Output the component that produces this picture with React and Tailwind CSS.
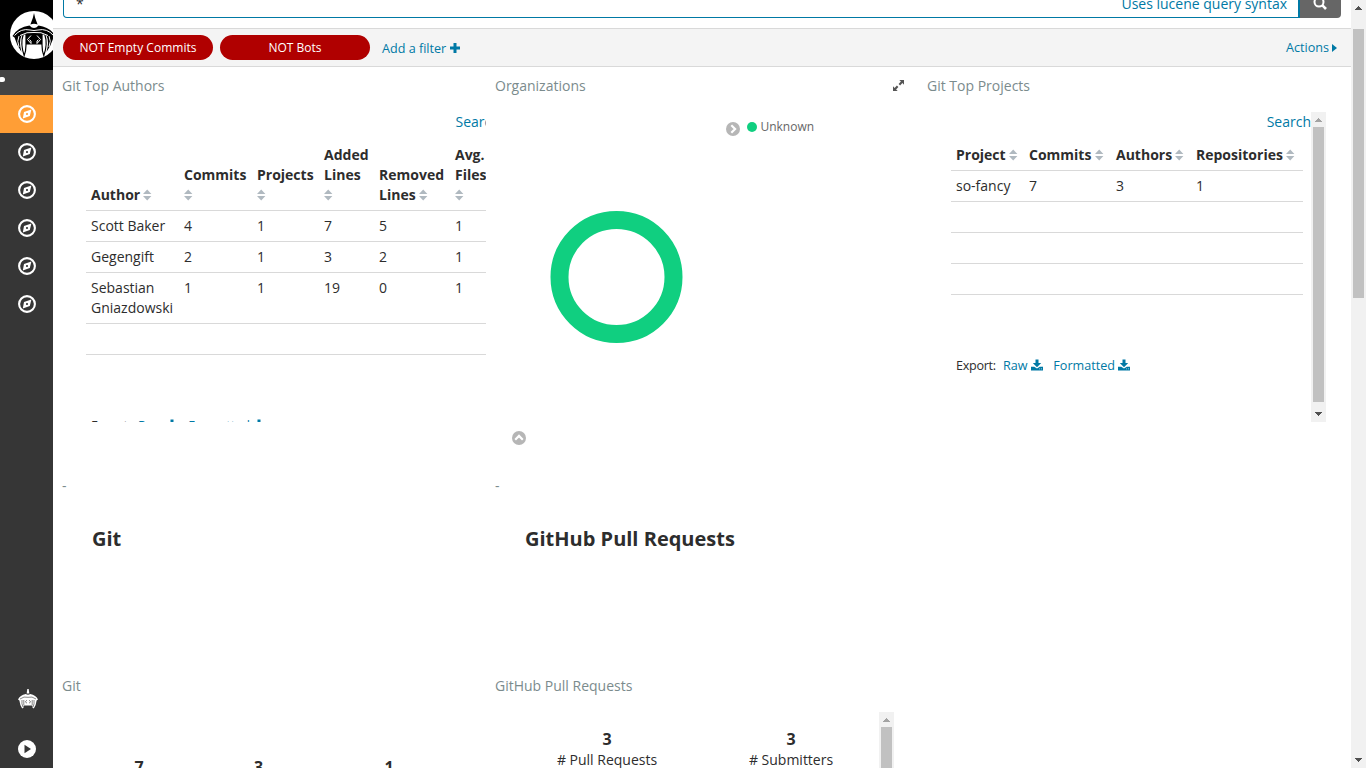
import React from "react";

const Compass = () => (
  <svg width="18" height="18" viewBox="0 0 18 18" fill="none">
    <circle cx="9" cy="9" r="7.9" stroke="#fff" strokeWidth="2.1" />
    <path fill="#fff" fillRule="evenodd" d="M13.4 4.4L6 7L4.8 13.6L11.8 11zM9 7.9A1.1 1.1 0 1 1 9 10.1A1.1 1.1 0 1 1 9 7.9z" />
  </svg>
);

const Logo = () => (
  <svg className="h-12 w-12 max-w-none shrink-0" width="48" height="48" viewBox="0 0 48 48">
    <circle cx="24" cy="24" r="24" fill="#fff" />
    <path d="M24 2L25.2 7L27.6 13.5Q24 12 20.4 13.5L22.8 7z" />
    <path d="M19.5 14.5Q24 19.5 28.5 14.5Q40 16 45.5 25L43.5 26.5Q41 35 36.5 41Q39.5 31 36.5 24.5L32 22.5V33.5H16V22.5L11.5 24.5Q8.5 31 11.5 41Q7 35 4.5 26.5L2.5 25Q8 16 19.5 14.5z" />
    <path d="M13.2 23.5L16 22.5V34Q16 40 14.2 44.5Q10 33 13.2 23.5z" fill="#fff" stroke="#000" strokeWidth="1.2" />
    <path d="M34.8 23.5L32 22.5V34Q32 40 33.8 44.5Q38 33 34.8 23.5z" fill="#fff" stroke="#000" strokeWidth="1.2" />
    <g fill="none" stroke="#fff" strokeWidth="1">
      <path d="M4.5 24.5Q11 17 20 19Q24 20 28 19Q37 17 43.5 24.5" />
      <path d="M10 24.5Q17 20.5 24 21.5Q31 20.5 38 24.5" />
      <path d="M9 25Q6.5 30 9 36M39 25Q41.5 30 39 36" />
      <path d="M21 24.5L17.5 28.5L21 32.5V30L19.5 28.7M27 24.5L30.5 28.5L27 32.5V30L28.5 28.7" />
    </g>
  </svg>
);

const Helmet = () => (
  <svg className="mb-[30px]" width="20" height="21" viewBox="0 0 20 21">
    <g fill="#fff">
      <path d="M9.3 0H10.7L11.3 4.5H8.7z" />
      <path d="M7.8 5Q10 6.3 12.2 5Q18 6 20 10.5L18.6 11.5Q18.2 16 15.8 19.5L14.4 18.5V16.5H5.6V18.5L4.2 19.5Q1.8 16 1.4 11.5L0 10.5Q2 6 7.8 5z" />
    </g>
    <g fill="none" stroke="#363636" strokeWidth="0.6">
      <path d="M2 10Q6 7 10 8.3Q14 7 18 10M4 11Q3.4 15 5 18M16 11Q16.6 15 15 18M5.8 11V16M14.2 11V16M9 11.2L7.3 12.8L9 14.2M11 11.2L12.7 12.8L11 14.2" />
    </g>
  </svg>
);

const Sort = () => (
  <svg className="-ml-[0.5px] inline-block align-[-1px]" width="9" height="12" viewBox="0 0 9 12" fill="#b0b9c0">
    <path d="M4.2 0.5L8.4 5H0zM0 7H8.4L4.2 11.5z" />
  </svg>
);

const Download = () => (
  <svg className="inline-block align-[-1px]" width="12" height="12" viewBox="0 0 12 12" fill="#0079a5">
    <path d="M4.5 0.5H7.5V4H10.2L6 8.2L1.8 4H4.5z" />
    <path fillRule="evenodd" d="M0 7.8H3.2L6 9.4L8.8 7.8H12V11.4H0zM8.3 9.5V10.3H9.1V9.5zM10.1 9.5V10.3H10.9V9.5z" />
  </svg>
);

const Chevron = ({ className }) => (
  <svg className={className} width="14" height="14" viewBox="0 0 14 14">
    <circle cx="7" cy="7" r="7" fill="#b6b6b6" />
    <path d="M5.3 3.2L9.1 7L5.3 10.8" stroke="#fff" strokeWidth="2.2" fill="none" />
  </svg>
);

const Arrow = ({ down, color }) => (
  <svg width="7" height="4" viewBox="0 0 7 4" shapeRendering="crispEdges" fill={color} className={down ? "rotate-180" : ""}>
    <path d="M3 0H4V1H5V2H6V3H7V4H0V3H1V2H2V1H3z" />
  </svg>
);

const Title = ({ children }) => <h3 className="h-[30px] text-[14px] leading-[30px] text-[#7b8b8d]">{children}</h3>;

const Export = () => (
  <div className="mt-[31px] flex pl-[5px] text-[12.6px] leading-[18px] whitespace-nowrap">
    <span className="w-[40px] tracking-[-0.3px]">Export:</span>
    <span className="ml-[7px] text-[#0079a5]">Raw <Download /></span>
    <span className="ml-[10.5px] text-[#0079a5]">Formatted <Download /></span>
  </div>
);

const Table = ({ cols, width, heads, rows }) => (
  <table className={"table-fixed border-collapse " + width}>
    <colgroup>{cols.map((c, i) => <col key={i} style={{ width: c }} />)}</colgroup>
    <thead>
      <tr>{heads.map((h, i) => <th key={i} className="px-[5px] py-[5px] text-left align-bottom font-bold">{h} <Sort /></th>)}</tr>
    </thead>
    <tbody>
      {rows.map((r, i) => (
        <tr key={i} className="h-[31px] border-t border-[#d9d9d9]">
          {r.map((v, j) => <td key={j} className="p-[5px] align-top">{v}</td>)}
        </tr>
      ))}
    </tbody>
  </table>
);

const Metric = ({ className, value, label }) => (
  <div className={"flex flex-col items-center " + className}>
    <b className="text-[16px] leading-[22px]">{value}</b>
    <span className="leading-5 whitespace-nowrap">{label}</span>
  </div>
);

export default function App() {
  return (
    <div className="flex h-[768px] w-[1366px] overflow-hidden bg-white font-['Open_Sans',sans-serif] text-[14px] leading-5 text-[#2d2d2d]">
      <nav className="flex w-[53px] shrink-0 flex-col bg-[#363636]">
        <div className="h-[70px] overflow-hidden bg-black pt-[11px] pl-[10px]">
          <Logo />
        </div>
        <div className="h-[25px] bg-[#444] pt-[7px]"><div className="-ml-px h-[5px] w-[6px] rounded-full bg-white" /></div>
        {[0, 1, 2, 3, 4, 5].map((i) => (
          <div key={i} className={"flex h-[38px] items-center justify-center pl-px " + (i === 0 ? "bg-[#ff9e36]" : "")}><Compass /></div>
        ))}
        <div className="mt-auto flex flex-col items-center pb-[10px] pl-[3px]">
          <Helmet />
          <svg className="-ml-[2px]" width="18" height="18" viewBox="0 0 18 18"><circle cx="9" cy="9" r="9" fill="#fff" /><path d="M6.5 4.8L13 9L6.5 13.2z" fill="#363636" /></svg>
        </div>
      </nav>

      <main className="flex w-[1298px] shrink-0 flex-col overflow-hidden">
        <div className="flex h-7 shrink-0 items-start overflow-hidden pl-[10px]">
          <div className="-mt-4 flex h-[34px] w-[1237px] items-center justify-between rounded-bl-[4px] border-2 border-y border-l border-[#0079a5] pr-[11px] pl-[12px]">
            <span className="pt-[5px]">*</span>
            <span className="pt-[6px] text-[14px] text-[#0079a5]">Uses lucene query syntax</span>
          </div>
          <div className="-mt-4 flex h-[34px] w-[41px] items-center justify-center rounded-br-[4px] bg-[#666] pt-[4px] pr-px">
            <svg width="14" height="14" viewBox="0 0 14 14" fill="none" stroke="#fff" strokeWidth="2"><circle cx="6" cy="6" r="4.5" /><path d="M9.2 9.2L13 13" strokeWidth="2.6" /></svg>
          </div>
        </div>
        <div className="flex h-[39px] shrink-0 items-center border-y border-[#d9d9d9] bg-[#f4f4f4] pr-[14px] pl-[10px] text-[12.6px] text-[#0079a5]">
          <div className="flex h-[25px] w-[150px] items-center justify-center rounded-full bg-[#b00000] text-[12px] tracking-[0.02px] text-white">NOT Empty Commits</div>
          <div className="ml-[7px] flex h-[25px] w-[150px] items-center justify-center rounded-full bg-[#b00000] text-[12px] text-white">NOT Bots</div>
          <span className="ml-3 pt-[2px]">Add a filter</span>
          <svg className="ml-[3.5px]" width="10" height="10" viewBox="0 0 10 10" fill="#0079a5"><path d="M3.5 0H6.5V3.5H10V6.5H6.5V10H3.5V6.5H0V3.5H3.5z" /></svg>
          <span className="ml-auto">Actions</span>
          <svg className="ml-[3px]" width="5" height="8" viewBox="0 0 5 8" fill="#0079a5"><path d="M0 0L5 4L0 8z" /></svg>
        </div>

        <div className="grid shrink-0 grid-cols-[433px_432px_400px] grid-rows-[400px_200px_200px] pt-1 pl-[9px]">
          <section>
            <Title>Git Top Authors</Title>
            <div className="mt-[11px] h-[310px] w-[424px] overflow-hidden pl-6">
              <div className="mb-2 pl-[369.5px] whitespace-nowrap text-[#0079a5]">Search</div>
              <Table
                width="w-[439px]"
                cols={[93, 73, 67, 55, 76, 75]}
                heads={["Author", "Commits", "Projects", "Added Lines", "Removed Lines", <>Avg.<br />Files<br /></>]}
                rows={[
                  ["Scott Baker", 4, 1, 7, 5, 1],
                  ["Gegengift", 2, 1, 3, 2, 1],
                  ["Sebastian Gniazdowski", 1, 1, 19, 0, 1],
                  ["", "", "", "", "", ""],
                  ["", "", "", "", "", ""],
                ]}
              />
              <Export />
            </div>
          </section>
          <section>
            <div className="flex items-center justify-between pr-[23px]">
              <Title>Organizations</Title>
              <svg className="-mt-px" width="11" height="11" viewBox="0 0 11 11" fill="#555"><path d="M6.3 0H11V4.7L9.4 3.1L7.1 5.4L5.6 3.9L7.9 1.6zM0 6.3L1.6 7.9L3.9 5.6L5.4 7.1L3.1 9.4L4.7 11H0z" /></svg>
            </div>
            <div className="mt-[11px] flex h-[310px]">
              <svg className="mt-[99px] ml-[55px]" width="133" height="132" viewBox="0 0 133 132"><circle cx="66.5" cy="66" r="57" fill="none" stroke="#10cf80" strokeWidth="18" /></svg>
              <div className="mt-[5px] ml-[43px] flex h-5 items-center text-[12px] text-[#666]">
                <Chevron className="mt-1" />
                <span className="mr-[3px] ml-[7px] h-[10px] w-[10px] rounded-full bg-[#10cf80]" />
                <span className="pl-[0.4px]">Unknown</span>
              </div>
            </div>
            <Chevron className="mt-[9px] ml-[17px] -rotate-90" />
          </section>
          <section>
            <Title>Git Top Projects</Title>
            <div className="mt-[11px] flex h-[310px] w-[399px]">
              <div className="w-[384px] overflow-hidden pl-6">
                <div className="mb-2 text-right text-[#0079a5]">Search</div>
                <Table
                  width="w-[352px]"
                  cols={[73, 87, 80, 112]}
                  heads={["Project", "Commits", "Authors", "Repositories"]}
                  rows={[["so-fancy", 7, 3, 1], ["", "", "", ""], ["", "", "", ""], ["", "", "", ""], ["", "", "", ""]]}
                />
                <Export />
              </div>
              <div className="flex w-[15px] shrink-0 flex-col items-center bg-[#f1f1f1] pt-[6px] pb-[6px]">
                <Arrow color="#a3a3a3" />
                <div className="mt-[5px] mb-[10px] w-[11px] flex-1 bg-[#c1c1c1]" />
                <Arrow down color="#505050" />
              </div>
            </div>
          </section>

          <section>
            <Title>-</Title>
            <h1 className="mt-[23px] pl-[30px] text-[20px] leading-[30px] font-bold">Git</h1>
          </section>
          <section>
            <Title>-</Title>
            <h1 className="mt-[23px] pl-[30px] text-[20px] leading-[30px] font-bold">GitHub Pull Requests</h1>
          </section>
          <section />

          <section>
            <Title>Git</Title>
            <div className="mt-[55px] flex pl-[17px]">
              <Metric className="w-[120px]" value="7" label="# Commits" />
              <Metric className="w-[119px]" value="3" label="# Authors" />
              <Metric className="w-[142px]" value="1" label="# Repositories" />
            </div>
          </section>
          <section>
            <Title>GitHub Pull Requests</Title>
            <div className="mt-[11px] flex h-[90px] w-[399px]">
              <div className="flex w-[384px] shrink-0 pt-4 pl-5">
                <Metric className="w-[184px] shrink-0" value="3" label="# Pull Requests" />
                <Metric className="w-[184px] shrink-0" value="3" label="# Submitters" />
              </div>
              <div className="flex w-[15px] shrink-0 flex-col items-center bg-[#f1f1f1] pt-[6px]">
                <Arrow color="#a3a3a3" />
                <div className="mt-[5px] w-[11px] flex-1 bg-[#c1c1c1]" />
              </div>
            </div>
          </section>
        </div>
      </main>

      <div className="flex w-[15px] shrink-0 flex-col items-center bg-[#f1f1f1] py-[6px]">
        <Arrow color="#505050" />
        <div className="mt-[19px] h-[269px] w-[11px] bg-[#c1c1c1]" />
        <div className="mt-auto flex"><Arrow down color="#505050" /></div>
      </div>
    </div>
  );
}
